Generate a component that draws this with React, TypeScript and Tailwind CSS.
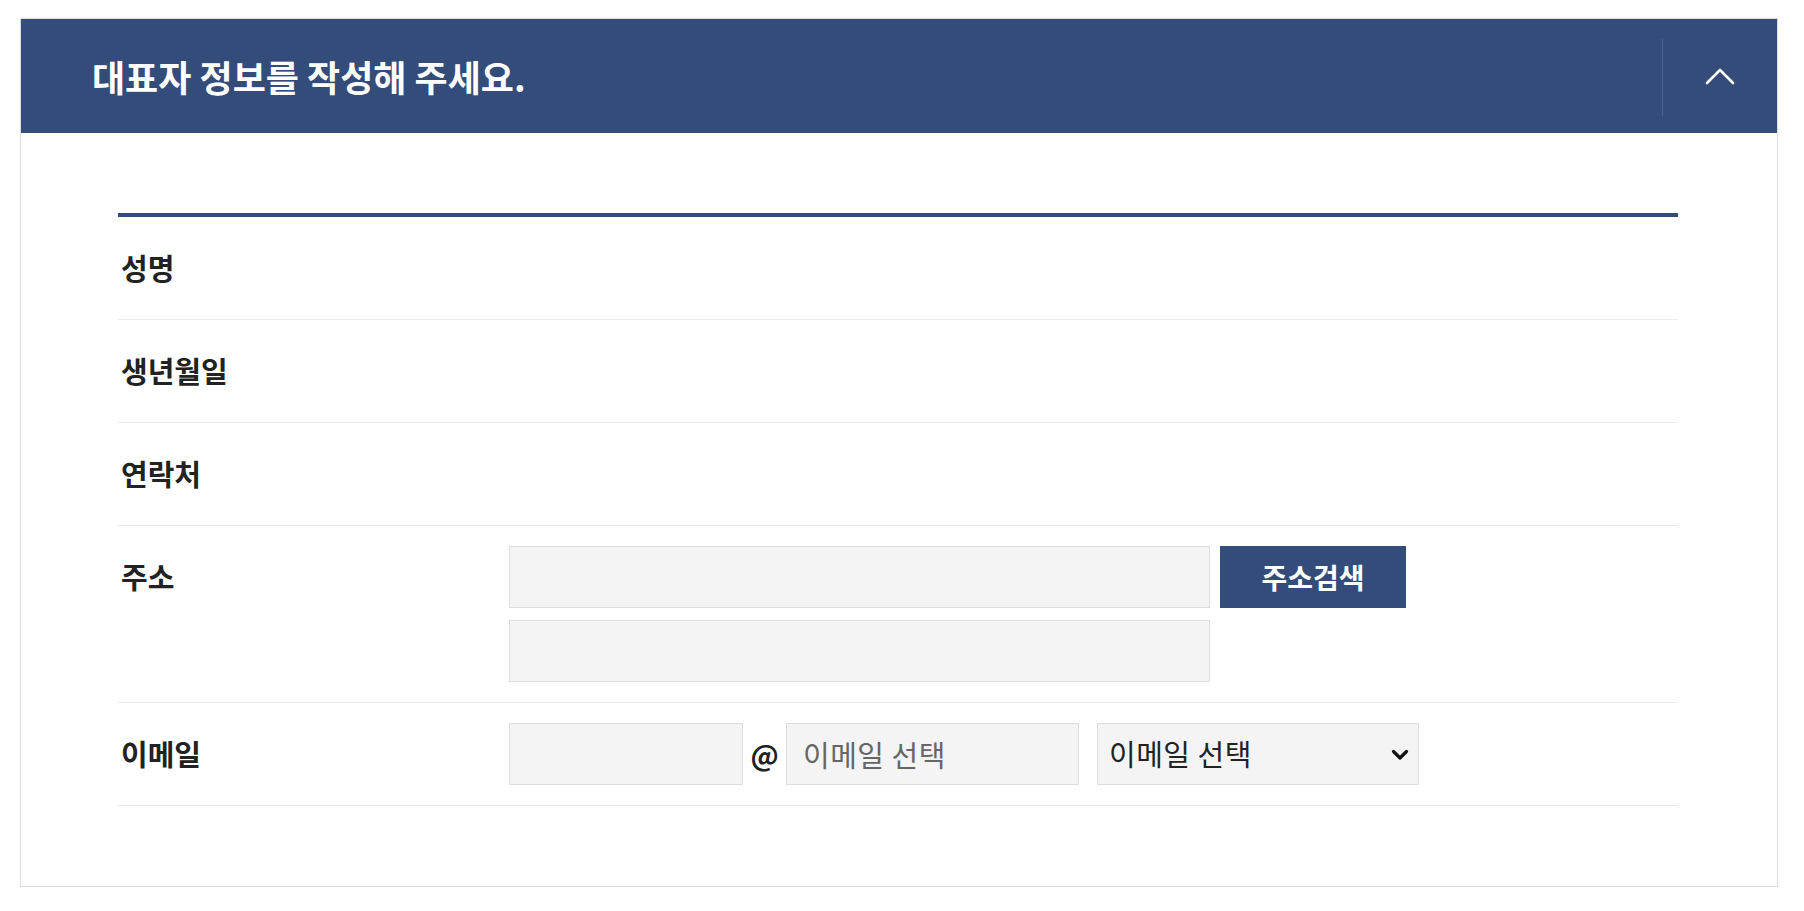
import { useState } from 'react';

const rows = ['성명', '생년월일', '연락처'];

function ChevronUp() {
  return (
    <svg width="30" height="19" viewBox="0 0 30 19" fill="none">
      <polyline points="2,17 15,4 28,17" stroke="#ffffff" strokeWidth="2.6" strokeLinecap="round" strokeLinejoin="round" />
    </svg>
  );
}

function Label({ children }: { children: string }) {
  return (
    <div className="w-[391px] shrink-0 h-[62px] flex items-center pl-[3px] text-[29px] font-bold text-[#222]">
      {children}
    </div>
  );
}

export default function App() {
  const [open] = useState(true);
  const [domain, setDomain] = useState('');

  return (
    <div className="min-h-screen bg-white pt-[18px] pl-[20px] font-['Noto_Sans_CJK_KR',sans-serif]">
      <div className="w-[1758px] border border-[#dcdcdc]">
        {/* Header */}
        <div className="h-[114px] bg-[#334c79] flex items-stretch">
          <h2 className="flex-1 flex items-center pl-[71px] text-[36px] font-bold text-white">
            대표자 정보를 작성해 주세요.
          </h2>
          <div className="w-[1px] bg-[#4a6190] mt-[20px] mb-[17px]" />
          <button className="w-[114px] flex items-center justify-center pb-[2px]">{open && <ChevronUp />}</button>
        </div>

        {/* Body */}
        <div className="pl-[97px] pr-[99px] pt-[80px] pb-[80px]">
          <div className="border-t-4 border-[#334c79]">
            {rows.map((r) => (
              <div key={r} className="flex py-5 border-b border-[#ebebeb]">
                <Label>{r}</Label>
                <div className="flex-1 h-[62px]" />
              </div>
            ))}

            {/* 주소 */}
            <div className="flex pt-5 pb-5 border-b border-[#ebebeb]">
              <Label>주소</Label>
              <div className="flex flex-col gap-[12px]">
                <div className="flex gap-[10px]">
                  <input className="w-[701px] h-[62px] bg-[#f4f4f4] border border-[#dedede] outline-none" />
                  <button className="w-[186px] h-[62px] bg-[#334c79] text-white text-[28px] font-bold">주소검색</button>
                </div>
                <input className="w-[701px] h-[62px] bg-[#f4f4f4] border border-[#dedede] outline-none" />
              </div>
            </div>

            {/* 이메일 */}
            <div className="flex py-5 border-b border-[#ebebeb]">
              <Label>이메일</Label>
              <div className="flex items-center">
                <input className="w-[234px] h-[62px] bg-[#f4f4f4] border border-[#dedede] outline-none" />
                <span className="w-[43px] text-center text-[28px] font-bold text-[#222]">@</span>
                <input
                  placeholder="이메일 선택"
                  className="w-[293px] h-[62px] bg-[#f4f4f4] border border-[#dedede] outline-none px-[16px] text-[29px] tracking-[0.5px] text-[#333] placeholder:text-[#666]"
                />
                <div className="relative ml-[18px]">
                  <select
                    value={domain}
                    onChange={(e) => setDomain(e.target.value)}
                    className="appearance-none w-[322px] h-[62px] bg-[#f4f4f4] border border-[#dedede] outline-none pl-[11px] text-[29px] tracking-[0.5px] text-[#222]"
                  >
                    <option value="">이메일 선택</option>
                    <option value="naver.com">naver.com</option>
                    <option value="gmail.com">gmail.com</option>
                    <option value="daum.net">daum.net</option>
                  </select>
                  <svg
                    className="absolute right-[10px] top-[26px] pointer-events-none"
                    width="18"
                    height="12"
                    viewBox="0 0 18 12"
                    fill="none"
                  >
                    <polyline points="2.5,2.5 9,9 15.5,2.5" stroke="#111" strokeWidth="3.2" strokeLinecap="round" strokeLinejoin="round" />
                  </svg>
                </div>
              </div>
            </div>
          </div>
        </div>
      </div>
    </div>
  );
}
